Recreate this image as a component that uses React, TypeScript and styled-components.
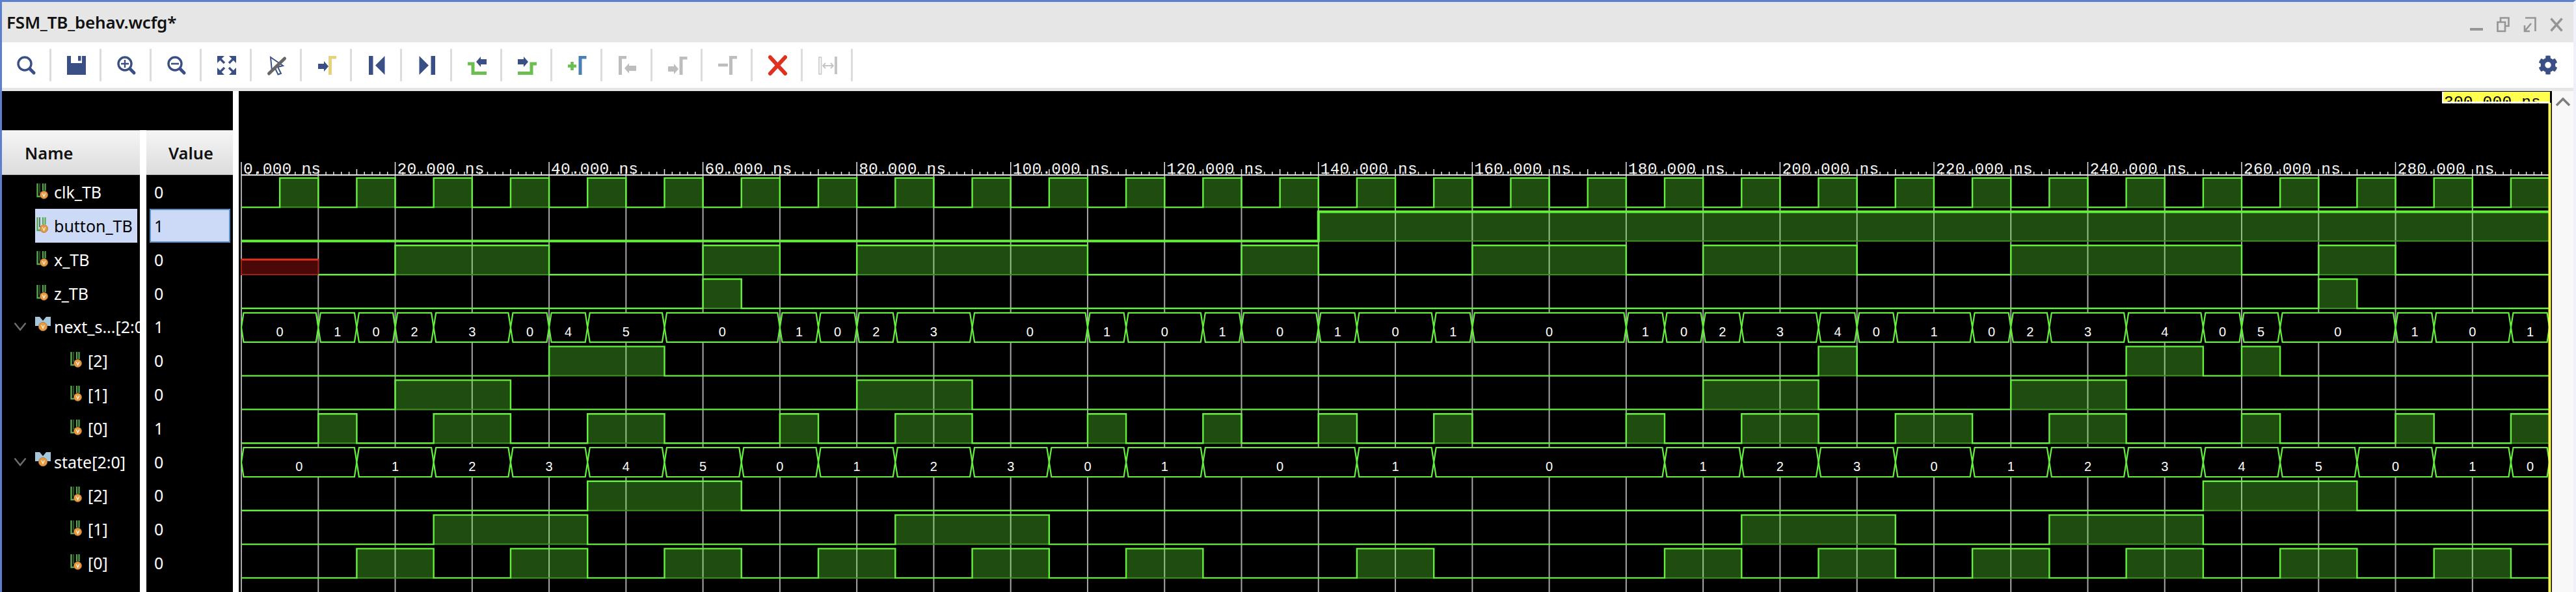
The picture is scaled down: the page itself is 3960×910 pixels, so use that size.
import React from "react";
import styled, { createGlobalStyle } from "styled-components";
import { FaCog } from "react-icons/fa";

const GlobalStyle = createGlobalStyle`
  html, body {
    margin: 0;
    padding: 0;
    background: #000;
  }
`;

const NAVY = "#3a4f85";
const GREEN = "#6abf50";
const GREY = "#bdbdbd";

// waveform data ------------------------------------------------------------

type Seg = [number, number, number];

const nextState: Seg[] = [
  [0, 10, 0], [10, 15, 1], [15, 20, 0], [20, 25, 2], [25, 35, 3], [35, 40, 0], [40, 45, 4], [45, 55, 5],
  [55, 70, 0], [70, 75, 1], [75, 80, 0], [80, 85, 2], [85, 95, 3], [95, 110, 0], [110, 115, 1], [115, 125, 0],
  [125, 130, 1], [130, 140, 0], [140, 145, 1], [145, 155, 0], [155, 160, 1], [160, 180, 0], [180, 185, 1],
  [185, 190, 0], [190, 195, 2], [195, 205, 3], [205, 210, 4], [210, 215, 0], [215, 225, 1], [225, 230, 0],
  [230, 235, 2], [235, 245, 3], [245, 255, 4], [255, 260, 0], [260, 265, 5], [265, 280, 0], [280, 285, 1],
  [285, 295, 0], [295, 300, 1],
];

const state: Seg[] = [
  [0, 15, 0], [15, 25, 1], [25, 35, 2], [35, 45, 3], [45, 55, 4], [55, 65, 5], [65, 75, 0], [75, 85, 1],
  [85, 95, 2], [95, 105, 3], [105, 115, 0], [115, 125, 1], [125, 145, 0], [145, 155, 1], [155, 185, 0],
  [185, 195, 1], [195, 205, 2], [205, 215, 3], [215, 225, 0], [225, 235, 1], [235, 245, 2], [245, 255, 3],
  [255, 265, 4], [265, 275, 5], [275, 285, 0], [285, 295, 1], [295, 300, 0],
];

const bitOf = (segs: Seg[], mask: number) => {
  const out: [number, number][] = [];
  segs.forEach(([s, e, v]) => {
    if (!(v & mask)) return;
    const last = out[out.length - 1];
    if (last && last[1] === s) last[1] = e;
    else out.push([s, e]);
  });
  return out;
};

const clock: [number, number][] = Array.from({ length: 30 }, (_, i) => [i * 10 + 5, i * 10 + 10]);

const xHigh: [number, number][] = [
  [20, 40], [60, 70], [80, 110], [130, 140], [160, 180], [190, 210], [230, 260], [270, 280],
];

const rows = [
  { name: "clk_TB", value: "0", kind: "bit", level: 0 },
  { name: "button_TB", value: "1", kind: "bit", level: 0, selected: true },
  { name: "x_TB", value: "0", kind: "bit", level: 0 },
  { name: "z_TB", value: "0", kind: "bit", level: 0 },
  { name: "next_s...[2:0]", value: "1", kind: "bus", level: 0 },
  { name: "[2]", value: "0", kind: "bit", level: 1 },
  { name: "[1]", value: "0", kind: "bit", level: 1 },
  { name: "[0]", value: "1", kind: "bit", level: 1 },
  { name: "state[2:0]", value: "0", kind: "bus", level: 0 },
  { name: "[2]", value: "0", kind: "bit", level: 1 },
  { name: "[1]", value: "0", kind: "bit", level: 1 },
  { name: "[0]", value: "0", kind: "bit", level: 1 },
];

const px = (t: number) => 371 + t * 11.827;
const baseOf = (i: number) => 318.6 + 51.8 * i;

// page layout --------------------------------------------------------------

const Window = styled.div`
  width: 3960px;
  height: 910px;
  box-sizing: border-box;
  border-top: 3px solid #5b80d0;
  border-left: 3px solid #5b80d0;
  border-right: 4px solid #eef1f8;
  display: flex;
  flex-direction: column;
  overflow: hidden;
  font-family: "Noto Sans", sans-serif;
`;

const TitleBar = styled.div`
  height: 62px;
  background: #e6e6e6;
  display: flex;
  align-items: center;
  justify-content: space-between;
  padding: 0 16px 0 7px;
`;

const Title = styled.div`
  font-size: 26px;
  font-weight: 600;
  color: #111;
  letter-spacing: -0.2px;
`;

const WindowButtons = styled.div`
  display: flex;
  gap: 21px;
  padding-top: 8px;
`;

const Toolbar = styled.div`
  height: 70px;
  background: #fff;
  border-bottom: 5px solid #e6e6e6;
  display: flex;
  align-items: center;
  padding-right: 24px;
  margin-left: -1px;
`;

const ToolButton = styled.div`
  width: 77px;
  height: 50px;
  box-sizing: border-box;
  border-right: 3px solid #dcdcdc;
  display: flex;
  align-items: center;
  justify-content: center;
  padding-left: 2px;
`;

const ToolSpacer = styled.div`
  flex: 1;
`;

const Gear = styled(FaCog)`
  width: 30px;
  height: 30px;
  color: ${NAVY};
`;

const Main = styled.div`
  flex: 1;
  display: flex;
  min-height: 0;
  background: #fff;
`;

const ListPane = styled.div`
  width: 355px;
  display: flex;
  flex-direction: column;
  background: #000;
`;

const ListTop = styled.div`
  height: 60px;
`;

const Columns = styled.div`
  flex: 1;
  display: flex;
`;

const Column = styled.div<{ $width: number }>`
  width: ${(p) => p.$width}px;
  overflow: hidden;
  background: #000;
`;

const ColumnGap = styled.div`
  width: 10px;
  background: #fff;
`;

const PaneGap = styled.div`
  width: 9px;
  background: #fff;
`;

const Header = styled.div<{ $left: number }>`
  height: 69.4px;
  box-sizing: border-box;
  background: linear-gradient(#f5f5f5, #dcdcdc);
  border-top: 1px solid #c4c4c4;
  border-bottom: 1px solid #b8b8b8;
  display: flex;
  align-items: center;
  padding-left: ${(p) => p.$left}px;
  font-size: 25.5px;
  font-weight: 600;
  color: #111;
`;

const NameRow = styled.div<{ $level: number }>`
  height: 51.8px;
  display: flex;
  align-items: stretch;
  padding-left: ${(p) => 18 + p.$level * 52}px;
  white-space: nowrap;
`;

const Expander = styled.div`
  width: 33px;
  flex: none;
  display: flex;
  align-items: center;
`;

const NameCell = styled.div<{ $selected?: boolean }>`
  width: ${(p) => (p.$selected ? "157px" : "auto")};
  display: flex;
  align-items: center;
  gap: 9px;
  font-size: 25px;
  color: ${(p) => (p.$selected ? "#000" : "#fff")};
  background: ${(p) => (p.$selected ? "#ccdaf8" : "transparent")};
`;

const SignalIcon = styled.svg`
  width: 20px;
  height: 24px;
  flex: none;
  margin-top: -2px;
`;

const BusIcon = styled.svg`
  width: 24px;
  height: 24px;
  flex: none;
  margin: -6px -4px 0 0;
`;

const ValueRow = styled.div`
  height: 51.8px;
  box-sizing: border-box;
  padding-left: 4.5px;
  display: flex;
`;

const ValueCell = styled.div<{ $selected?: boolean }>`
  width: 124px;
  box-sizing: border-box;
  padding-left: ${(p) => (p.$selected ? 5.5 : 7.5)}px;
  display: flex;
  align-items: center;
  font-size: 25px;
  color: ${(p) => (p.$selected ? "#000" : "#fff")};
  background: ${(p) => (p.$selected ? "#ccdaf8" : "transparent")};
  border: ${(p) => (p.$selected ? "2px solid #5a92c8" : "none")};
`;

const WavePane = styled.svg`
  width: 3556px;
  height: 770px;
  display: block;
  flex: none;
  background: #000;
`;

const ScrollBar = styled.div`
  flex: 1;
  background: #f8f8f8;
  display: flex;
  justify-content: center;
  padding-top: 9px;
`;

// waveform parts ------------------------------------------------------------

const GridLine = styled.line`
  stroke: #a8a8a8;
  stroke-width: 2;
`;

const RulerLine = styled.line`
  stroke: #e2e2e2;
  stroke-width: 2;
`;

const Tick = styled.line`
  stroke: #e8e8e8;
  stroke-width: 1.5;
`;

const RulerLabel = styled.text`
  font-family: "Liberation Mono", monospace;
  font-size: 24.5px;
  letter-spacing: 0.2px;
  fill: #f4f4f4;
`;

const HighFill = styled.rect`
  fill: rgb(100, 255, 50);
  fill-opacity: 0.3;
`;

const DimLine = styled.line`
  stroke: #3f9426;
  stroke-width: 2;
`;

const Trace = styled.path<{ $thick?: boolean }>`
  fill: none;
  stroke: #66f03e;
  stroke-width: ${(p) => (p.$thick ? 4 : 2.4)};
`;

const UnknownFill = styled.rect`
  fill: #4a0808;
  stroke: #a02018;
  stroke-width: 2;
`;

const UnknownTop = styled.line`
  stroke: #e03020;
  stroke-width: 3;
`;

const BusSegment = styled.polygon`
  fill: #000;
  stroke: #66f03e;
  stroke-width: 2.2;
`;

const BusValue = styled.text`
  font-family: "Liberation Sans", sans-serif;
  font-size: 20px;
  text-anchor: middle;
  fill: #fff;
`;

const CursorBar = styled.line`
  stroke: #ffff50;
  stroke-width: 4;
`;

const CursorFlag = styled.rect`
  fill: #ffff50;
`;

const CursorEdge = styled.path`
  fill: none;
  stroke: #fff;
  stroke-width: 2.5;
`;

const CursorLabel = styled.text`
  font-family: "Liberation Mono", monospace;
  font-size: 24.5px;
  letter-spacing: 0.2px;
  fill: #000;
`;

const Digital = ({ index, high, thick, from = 0 }: { index: number; high: [number, number][]; thick?: boolean; from?: number }) => {
  const base = baseOf(index);
  const top = base - 45;
  let d = `M${px(from)} ${base}`;
  high.forEach(([s, e]) => {
    d += ` H${px(s)} V${top} H${px(e)}`;
    if (e < 300) d += ` V${base}`;
  });
  const last = high[high.length - 1];
  if (!last || last[1] < 300) d += ` H${px(300)}`;
  return (
    <g>
      {high.map(([s, e]) => (
        <g key={s}>
          <HighFill x={px(s)} y={top} width={px(e) - px(s)} height={base - top} />
          <DimLine x1={px(s)} x2={px(e)} y1={base} y2={base} />
        </g>
      ))}
      <Trace d={d} $thick={thick} />
    </g>
  );
};

const Bus = ({ index, segs }: { index: number; segs: Seg[] }) => {
  const bot = baseOf(index);
  const top = bot - 45;
  const mid = (top + bot) / 2;
  return (
    <g>
      {segs.map(([s, e, v]) => {
        const a = px(s);
        const b = px(e);
        return (
          <g key={s}>
            <BusSegment
              points={`${a},${mid} ${a + 3.5},${top} ${b - 3.5},${top} ${b},${mid} ${b - 3.5},${bot} ${a + 3.5},${bot}`}
            />
            <BusValue x={(a + b) / 2} y={bot - 9}>
              {v}
            </BusValue>
          </g>
        );
      })}
    </g>
  );
};

const Waves = () => {
  const ticks = Array.from({ length: 300 }, (_, i) => i);
  const grid = Array.from({ length: 30 }, (_, i) => i * 10);
  const labels = Array.from({ length: 15 }, (_, i) => i * 20);
  return (
    <WavePane viewBox="367 140 3556 770">
      {grid.map((t) => (
        <GridLine key={t} x1={px(t)} x2={px(t)} y1={269} y2={910} />
      ))}
      <RulerLine x1={371} x2={px(300)} y1={269} y2={269} />
      {ticks.map((t) => (
        <Tick key={t} x1={px(t)} x2={px(t)} y1={t % 20 === 0 ? 249 : t % 5 === 0 ? 260 : 264} y2={269} />
      ))}
      {labels.map((t) => (
        <RulerLabel key={t} x={px(t) + 3} y={267}>
          {t}.000 ns
        </RulerLabel>
      ))}

      <Digital index={0} high={clock} />
      <Digital index={1} high={[[140, 300]]} thick />
      <UnknownFill x={px(0)} y={399} width={px(10) - px(0)} height={23} />
      <UnknownTop x1={px(0)} x2={px(10)} y1={399} y2={399} />
      <Digital index={2} high={xHigh} from={10} />
      <Digital index={3} high={[[60, 65], [270, 275]]} />
      <Bus index={4} segs={nextState} />
      <Digital index={5} high={bitOf(nextState, 4)} />
      <Digital index={6} high={bitOf(nextState, 2)} />
      <Digital index={7} high={bitOf(nextState, 1)} />
      <Bus index={8} segs={state} />
      <Digital index={9} high={bitOf(state, 4)} />
      <Digital index={10} high={bitOf(state, 2)} />
      <Digital index={11} high={bitOf(state, 1)} />

      <CursorBar x1={3919.5} x2={3919.5} y1={158} y2={910} />
      <svg x={3754} y={141} width={166} height={18} viewBox="3754 141 166 18">
        <CursorFlag x={3754} y={141} width={166} height={18} />
        <CursorLabel x={3757} y={164}>
          300.000 ns
        </CursorLabel>
        <CursorEdge d="M3755 141 V157.5 H3920" />
      </svg>
    </WavePane>
  );
};

// icons ---------------------------------------------------------------------

const Medal = ({ cx, cy, r = 6 }: { cx: number; cy: number; r?: number }) => (
  <g>
    <circle cx={cx} cy={cy} r={r} fill="#ea9a3e" stroke="#a9713a" strokeWidth={0.8} />
    <path d={`M${cx - 2.2} ${cy - 2.2} L${cx} ${cy + 2.6} L${cx + 2.2} ${cy - 2.2}`} fill="none" stroke="#fff" strokeWidth={1.1} />
  </g>
);

const BitGlyph = () => (
  <SignalIcon viewBox="0 0 20 24">
    <path d="M3.5 0 V20 H8" fill="none" stroke="#57a94c" strokeWidth={2.4} />
    <path d="M7 0 V15" fill="none" stroke="#2f6a2b" strokeWidth={1.6} />
    <path d="M12 0 V11 M15.5 0 V11" fill="none" stroke="#57a94c" strokeWidth={2.2} />
    <Medal cx={13.5} cy={17.5} />
  </SignalIcon>
);

const BusGlyph = () => (
  <BusIcon viewBox="0 0 24 24">
    <path d="M0 0 L7 0 L12 6 L17 0 L24 0 L24 14 L0 14 Z" fill="#a3c6da" />
    <Medal cx={12} cy={15} r={6.6} />
  </BusIcon>
);

const Chevron = () => (
  <svg width="20" height="14" viewBox="0 0 20 14">
    <path d="M1.5 1.5 L10 12 L18.5 1.5" fill="none" stroke="#6e6e6e" strokeWidth={2.4} />
  </svg>
);

const Marker = ({ x, color, y = 0 }: { x: number; color: string; y?: number }) => (
  <path d={`M${x} ${29} V${y} H${x + 12} V${y + 4.5} H${x + 5} V29 Z`} fill={color} />
);

const ArrowLeft = ({ x, y, color, len = 18 }: { x: number; y: number; color: string; len?: number }) => (
  <path d={`M${x} ${y} L${x + 7} ${y - 8} V${y - 4} H${x + len} V${y + 4} H${x + 7} V${y + 8} Z`} fill={color} />
);

const ArrowRight = ({ x, y, color, len = 16 }: { x: number; y: number; color: string; len?: number }) => (
  <path d={`M${x + len} ${y} L${x + len - 7} ${y - 8} V${y - 4} H${x} V${y + 4} H${x + len - 7} V${y + 8} Z`} fill={color} />
);

const Lens = ({ inner }: { inner?: React.ReactNode }) => (
  <g>
    <circle cx={12} cy={12} r={10} fill="none" stroke={NAVY} strokeWidth={3.4} />
    <path d="M20 20 L26 26" stroke={NAVY} strokeWidth={5} strokeLinecap="round" />
    {inner}
  </g>
);

const toolIcons: Record<string, React.ReactNode> = {
  search: <Lens />,
  save: (
    <g>
      <rect width={29} height={29} fill={NAVY} />
      <rect x={6} width={17} height={11} fill="#fff" />
      <rect x={17} width={4.5} height={7.5} fill={NAVY} />
    </g>
  ),
  zoomIn: <Lens inner={<path d="M12 6 V18 M6 12 H18" stroke={NAVY} strokeWidth={2.4} />} />,
  zoomOut: <Lens inner={<path d="M6 12 H18" stroke={NAVY} strokeWidth={2.6} />} />,
  fit: (
    <g fill={NAVY} stroke={NAVY}>
      {[0, 90, 180, 270].map((r) => (
        <g key={r} transform={`rotate(${r} 14.5 14.5)`}>
          <path d="M0 0 H11 L0 11 Z" strokeWidth={0} />
          <path d="M3 3 L11 11" strokeWidth={3.4} />
        </g>
      ))}
    </g>
  ),
  cursor: (
    <g>
      <path d="M5 2 L24 15 L16 17 L21 27 L16.5 28.5 L12 19 L7 23 Z" fill="#fff" stroke={NAVY} strokeWidth={2} />
      <path d="M2.5 27 L26.5 4" stroke="#666" strokeWidth={5} strokeLinecap="round" />
    </g>
  ),
  gotoCursor: (
    <g>
      <ArrowRight x={1} y={16} color={NAVY} />
      <Marker x={17} color="#e6d27a" />
    </g>
  ),
  first: <path d="M2 0 H8.5 V29 H2 Z M26.5 0 V29 L12 14.5 Z" fill={NAVY} />,
  last: <path d="M27 0 H20.5 V29 H27 Z M2.5 0 V29 L17 14.5 Z" fill={NAVY} />,
  prevEdge: (
    <g>
      <path d="M0 12 H8 V26.5 H29" fill="none" stroke={GREEN} strokeWidth={5} />
      <ArrowLeft x={13} y={9} color={NAVY} len={16} />
    </g>
  ),
  nextEdge: (
    <g>
      <path d="M29 12 H21 V26.5 H0" fill="none" stroke={GREEN} strokeWidth={5} />
      <ArrowRight x={0} y={9} color={NAVY} />
    </g>
  ),
  addMarker: (
    <g>
      <path d="M0 15.5 H13 M6.5 9 V22" stroke={GREEN} strokeWidth={4.6} />
      <Marker x={16.5} color="#4a7fb5" />
    </g>
  ),
  prevMarker: (
    <g>
      <Marker x={1} color={GREY} />
      <ArrowLeft x={10} y={19} color={GREY} />
    </g>
  ),
  nextMarker: (
    <g>
      <ArrowRight x={0} y={20} color={GREY} />
      <Marker x={17.5} y={1} color={GREY} />
    </g>
  ),
  delMarker: (
    <g>
      <path d="M0 14 H15" stroke={GREY} strokeWidth={4.6} />
      <Marker x={17} color={GREY} />
    </g>
  ),
  deleteAll: <path d="M3 2 L26 27 M26 2 L3 27" stroke="#e0301e" strokeWidth={6} strokeLinecap="round" />,
  distance: (
    <g>
      <rect x={1} y={2} width={3.5} height={26} fill="#fff" stroke="#c8c8c8" strokeWidth={1.6} />
      <rect x={25} y={1} width={4} height={27} fill="#c4c4c4" />
      <path d="M7 15 H23 M11 11 L7 15 L11 19 M19 11 L23 15 L19 19" fill="none" stroke="#c4c4c4" strokeWidth={1.8} />
    </g>
  ),
};

const toolOrder = [
  "search", "save", "zoomIn", "zoomOut", "fit", "cursor", "gotoCursor", "first", "last",
  "prevEdge", "nextEdge", "addMarker", "prevMarker", "nextMarker", "delMarker", "deleteAll", "distance",
];

const ToolIcon = styled.svg`
  width: 29px;
  height: 29px;
  overflow: visible;
`;

const WinIcon = styled.svg`
  width: 20px;
  height: 24px;
`;

const winStroke = { fill: "none", stroke: "#959595", strokeWidth: 2.6 };

export default function App() {
  return (
    <Window>
      <GlobalStyle />
      <TitleBar>
        <Title>FSM_TB_behav.wcfg*</Title>
        <WindowButtons>
          <WinIcon viewBox="0 0 20 24">
            <path d="M0 19 H20" {...winStroke} strokeWidth={4} />
          </WinIcon>
          <WinIcon viewBox="0 0 20 24">
            <path d="M6 7 V1.5 H18.5 V14 H13 M1.5 8 H13 V22 H1.5 Z" {...winStroke} />
          </WinIcon>
          <WinIcon viewBox="0 0 20 24">
            <path d="M3 1.5 H18.5 V22 M2 22 L12 10 M2 13 V22 H10" {...winStroke} />
          </WinIcon>
          <WinIcon viewBox="0 0 20 24">
            <path d="M1.5 2.5 L18.5 21.5 M18.5 2.5 L1.5 21.5" {...winStroke} strokeWidth={3.4} />
          </WinIcon>
        </WindowButtons>
      </TitleBar>
      <Toolbar>
        {toolOrder.map((k) => (
          <ToolButton key={k}>
            <ToolIcon viewBox="0 0 29 29">{toolIcons[k]}</ToolIcon>
          </ToolButton>
        ))}
        <ToolSpacer />
        <Gear />
      </Toolbar>
      <Main>
        <ListPane>
          <ListTop />
          <Columns>
            <Column $width={212}>
              <Header $left={35}>Name</Header>
              {rows.map((r, i) => (
                <NameRow key={i} $level={r.level}>
                  <Expander>{r.kind === "bus" && <Chevron />}</Expander>
                  <NameCell $selected={r.selected}>
                    {r.kind === "bus" ? <BusGlyph /> : <BitGlyph />}
                    <span>{r.name}</span>
                  </NameCell>
                </NameRow>
              ))}
            </Column>
            <ColumnGap />
            <Column $width={133}>
              <Header $left={34}>Value</Header>
              {rows.map((r, i) => (
                <ValueRow key={i}>
                  <ValueCell $selected={r.selected}>{r.value}</ValueCell>
                </ValueRow>
              ))}
            </Column>
          </Columns>
        </ListPane>
        <PaneGap />
        <Waves />
        <ScrollBar>
          <svg width="24" height="15" viewBox="0 0 24 15">
            <path d="M2 13 L12 3 L22 13" fill="none" stroke="#7d7d7d" strokeWidth={3.6} />
          </svg>
        </ScrollBar>
      </Main>
    </Window>
  );
}
